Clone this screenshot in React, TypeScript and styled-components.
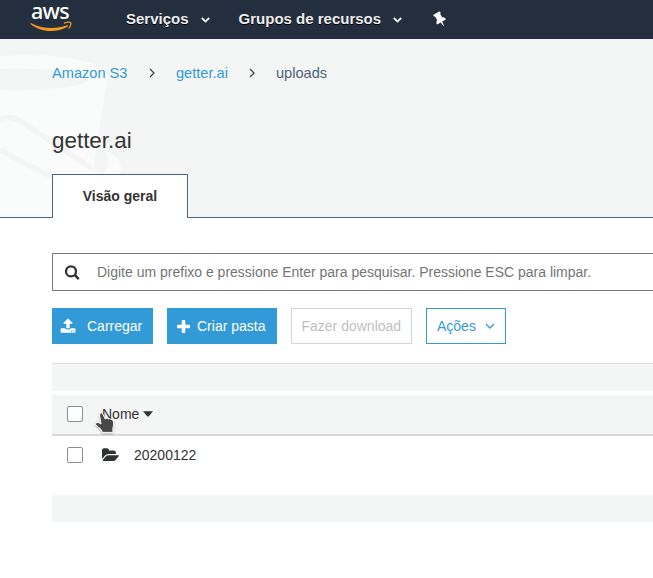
import React from "react";
import styled, { createGlobalStyle } from "styled-components";

const GlobalStyle = createGlobalStyle`
  * { box-sizing: border-box; }
  body {
    margin: 0;
    background: #fff;
    overflow: hidden;
    font-family: "Liberation Sans", Arial, sans-serif;
    font-size: 14px;
    color: #333;
  }
`;

const Page = styled.div`
  width: 100%;
  height: 578px;
`;

const NavBar = styled.header`
  display: flex;
  align-items: center;
  height: 39px;
  padding-left: 30px;
  background: #232f3e;
  color: #fff;
  border-bottom: 1px solid #232744;
`;

const Logo = styled.div`
  display: flex;
  flex-direction: column;
  width: 42px;
  height: 38px;
  margin-right: 54px;
  svg { margin-top: -1px; }
`;

const LogoWord = styled.span`
  height: 22px;
  padding-left: 1px;
  font: 500 21.5px/22px "Noto Sans", sans-serif;
  letter-spacing: -0.7px;
`;

const NavItem = styled.div<{ $gap: number }>`
  display: flex;
  align-items: center;
  margin-right: ${(p) => p.$gap}px;
  font-size: 15px;
  font-weight: bold;
  line-height: 18px;
  color: #eee;
  text-shadow: 0 1px 0 #000;
  white-space: nowrap;
  svg { margin: 2px 0 0 12px; }
`;

const Hero = styled.section`
  position: relative;
  display: flex;
  flex-direction: column;
  height: 179px;
  padding-left: 52px;
  background: #f4f6f6;
  border-bottom: 1px solid #4d6376;
`;

const Watermark = styled.svg`
  position: absolute;
  left: 0;
  top: 0;
`;

const Crumbs = styled.nav`
  position: relative;
  display: flex;
  align-items: center;
  height: 18px;
  margin-top: 25px;
  font-size: 14.6px;
  line-height: 18px;
`;

const Crumb = styled.span<{ $current?: boolean; $width: number }>`
  width: ${(p) => p.$width}px;
  color: ${(p) => (p.$current ? "#4d6376" : "#329ad6")};
  white-space: nowrap;
`;

const CrumbArrow = styled.svg`
  margin: 0 20px;
  flex: none;
`;

const Title = styled.h1`
  position: relative;
  margin: 46px 0 0;
  font-size: 22.4px;
  font-weight: normal;
  line-height: 26px;
`;

const Tab = styled.div`
  position: relative;
  width: 136px;
  height: 44px;
  margin-top: auto;
  margin-bottom: -1px;
  flex: none;
  border: 1px solid #4d6376;
  border-bottom: 0;
  background: #fff;
  font-weight: bold;
  line-height: 42px;
  text-align: center;
`;

const Content = styled.main`
  margin: 35px 0 0 52px;
`;

const SearchBox = styled.div`
  display: flex;
  align-items: center;
  height: 38px;
  padding-left: 12px;
  border: 1px solid #7d7d7d;
  border-right: 0;
  color: #757575;
  font-size: 14px;
  white-space: nowrap;
  svg { margin-right: 17px; }
`;

const Toolbar = styled.div`
  display: flex;
  gap: 14px;
  margin-top: 17px;
`;

const buttonColors = {
  primary: { bg: "#329ad6", fg: "#fff", line: "#329ad6" },
  disabled: { bg: "#fff", fg: "#bfbfbf", line: "#d5d5d5" },
  outline: { bg: "#fff", fg: "#329ad6", line: "#329ad6" },
};

const Button = styled.button<{ $kind: keyof typeof buttonColors; $width: number; $gap?: number; $inset: number }>`
  display: flex;
  align-items: center;
  gap: ${(p) => p.$gap ?? 0}px;
  width: ${(p) => p.$width}px;
  height: 36px;
  padding: 0 0 0 ${(p) => p.$inset}px;
  border: 1px solid ${(p) => buttonColors[p.$kind].line};
  background: ${(p) => buttonColors[p.$kind].bg};
  color: ${(p) => buttonColors[p.$kind].fg};
  font: 14px "Liberation Sans", Arial, sans-serif;
  white-space: nowrap;
  svg { flex: none; }
`;

const Band = styled.div<{ $height: number; $line?: boolean }>`
  height: ${(p) => p.$height}px;
  background: #f4f6f6;
  border-top: ${(p) => (p.$line ? "1px solid #e0e1e1" : "0")};
`;

const Table = styled.div`
  margin-top: 19px;
`;

const HeaderRow = styled.div`
  display: flex;
  align-items: center;
  height: 41px;
  margin-top: 4px;
  padding: 0 0 1px 15px;
  background: #f4f6f6;
  border-bottom: 2px solid #d9d9d9;
`;

const Row = styled.div`
  display: flex;
  align-items: center;
  height: 38px;
  margin-bottom: 21px;
  padding-left: 15px;
`;

const Checkbox = styled.span`
  width: 16px;
  height: 16px;
  margin-right: 19px;
  border: 1px solid #8b8e8e;
  border-radius: 2px;
  background: #fff;
`;

const SortLabel = styled.span`
  position: relative;
  display: flex;
  align-items: center;
  gap: 4px;
`;

const Pointer = styled.svg`
  position: absolute;
  left: -8px;
  top: 6px;
  filter: drop-shadow(0 1px 1px rgba(0, 0, 0, 0.25));
`;

const FileName = styled.span`
  margin-left: 15px;
`;

const Caret = () => (
  <svg width="9" height="6" viewBox="0 0 9 6">
    <path d="M.8 1l3.7 3.5L8.2 1" fill="none" stroke="#eee" strokeWidth="1.8" />
  </svg>
);

const Chevron = () => (
  <CrumbArrow width="8" height="10" viewBox="0 0 8 10">
    <path d="M2 1l4 4-4 4" fill="none" stroke="#444" strokeWidth="1.3" />
  </CrumbArrow>
);

const UploadIcon = () => (
  <svg width="16" height="16" viewBox="0 0 1792 1792" fill="currentColor">
    <path d="M1344 1472q0-26-19-45t-45-19-45 19-19 45 19 45 45 19 45-19 19-45zm256 0q0-26-19-45t-45-19-45 19-19 45 19 45 45 19 45-19 19-45zm128-224v320q0 40-28 68t-68 28h-1472q-40 0-68-28t-28-68v-320q0-40 28-68t68-28h427q21 56 70.5 92t110.5 36h256q61 0 110.5-36t70.5-92h427q40 0 68 28t28 68zm-325-648q-17 40-59 40h-256v448q0 26-19 45t-45 19h-256q-26 0-45-19t-19-45v-448h-256q-42 0-59-40-17-39 14-69l448-448q18-19 45-19t45 19l448 448q31 30 14 69z" />
  </svg>
);

const PlusIcon = () => (
  <svg width="13" height="13" viewBox="192 128 1408 1408" fill="currentColor">
    <path d="M1600 736v192q0 40-28 68t-68 28h-416v416q0 40-28 68t-68 28h-192q-40 0-68-28t-28-68v-416h-416q-40 0-68-28t-28-68v-192q0-40 28-68t68-28h416v-416q0-40 28-68t68-28h192q40 0 68 28t28 68v416h416q40 0 68 28t28 68z" />
  </svg>
);

const FolderIcon = () => (
  <svg width="17" height="14" viewBox="0 128 1880 1500" fill="#303333">
    <path d="M1879 952q0 31-31 66l-336 396q-43 51-120.5 86.5t-143.5 35.5h-1088q-34 0-60.5-13t-26.5-43q0-31 31-66l336-396q43-51 120.5-86.5t143.5-35.5h1088q34 0 60.5 13t26.5 43zm-343-344v160h-832q-94 0-197 47.5t-164 119.5l-337 396-5 6q0-4-.5-12.5t-.5-12.5v-960q0-92 66-158t158-66h320q92 0 158 66t66 158v32h544q92 0 158 66t66 158z" />
  </svg>
);

const PinIcon = () => (
  <svg width="16" height="16" viewBox="0 0 1792 1792" fill="#fff">
    <g transform="translate(90 0) rotate(-30 896 896)">
      <path d="M1472 1216q0 26-19 45t-45 19h-429l-51 483q-2 12-10.5 20.5t-20.5 8.5h-1q-27 0-32-27l-76-485h-404q-26 0-45-19t-19-45q0-123 78.5-221.5t177.5-98.5v-512q-52 0-90-38t-38-90 38-90 90-38h640q52 0 90 38t38 90-38 90-90 38v512q99 0 177.5 98.5t78.5 221.5z" />
    </g>
  </svg>
);

export default function App() {
  return (
    <Page>
      <GlobalStyle />
      <NavBar>
        <Logo>
          <LogoWord>aws</LogoWord>
          <svg width="42" height="11" viewBox="0 0 42 11">
            <path d="M.4 2.4Q.6 1.8 1.3 2.2C12.5 8 25.5 8.5 37 4.3c1.2-.4 1.7.5.8 1.2C27 12.2 10.5 11.8.6 3.1Z" fill="#f7981f" />
            <path d="M34 2.4c2.2-1.4 6.1-1.5 6.7-.8.6.8-.2 4-2 6" fill="none" stroke="#f7981f" strokeWidth="1.3" />
          </svg>
        </Logo>
        <NavItem $gap={29}>Serviços <Caret /></NavItem>
        <NavItem $gap={29}>Grupos de recursos <Caret /></NavItem>
        <PinIcon />
      </NavBar>
      <Hero>
        <Watermark width="125" height="178" viewBox="0 0 125 178">
          <path d="M0 17C52 13 105 22 108 36L93 131Q95 134 99 133L88 178H0Z" fill="#fafcfb" />
          <path d="M0 30C40 28 86 34 88 41C84 48 35 53 0 51Z" fill="#f4f6f6" />
          <path d="M0 80.5Q10 76 20 82L94 131M0 110Q25 126 60 141" fill="none" stroke="#f4f6f6" strokeWidth="5.5" />
          <path d="M106 111C115 115 122 123 121 131L118 137H101Q109 130 108 122Z" fill="#fafcfb" />
        </Watermark>
        <Crumbs>
          <Crumb $width={76}>Amazon S3</Crumb>
          <Chevron />
          <Crumb $width={52}>getter.ai</Crumb>
          <Chevron />
          <Crumb $width={60} $current>uploads</Crumb>
        </Crumbs>
        <Title>getter.ai</Title>
        <Tab>Visão geral</Tab>
      </Hero>
      <Content>
        <SearchBox>
          <svg width="15" height="15" viewBox="0 0 15 15" fill="none" stroke="#303333" strokeLinecap="round">
            <circle cx="6" cy="6.4" r="5" strokeWidth="2.3" />
            <path d="M10 10.2L13 13.3" strokeWidth="2.6" />
          </svg>
          Digite um prefixo e pressione Enter para pesquisar. Pressione ESC para limpar.
        </SearchBox>
        <Toolbar>
          <Button $kind="primary" $width={101} $inset={7} $gap={11}><UploadIcon />Carregar</Button>
          <Button $kind="primary" $width={110} $inset={8.5} $gap={7.5}><PlusIcon />Criar pasta</Button>
          <Button $kind="disabled" $width={121} $inset={9.5}>Fazer download</Button>
          <Button $kind="outline" $width={80} $inset={10} $gap={9}>
            Ações
            <svg width="10" height="6" viewBox="0 0 10 6"><path d="M1 1l4 4 4-4" fill="none" stroke="#329ad6" strokeWidth="1.3" /></svg>
          </Button>
        </Toolbar>
        <Table>
          <Band $height={28} $line />
          <HeaderRow>
            <Checkbox />
            <SortLabel>
              Nome
              <svg width="10" height="6" viewBox="0 0 10 6"><path d="M0 .3h10L5.8 5.2q-.8.8-1.6 0Z" fill="#303333" /></svg>
              <Pointer width="22" height="23" viewBox="0 0 22 23">
                <path d="M6.4 1.2Q7.8.3 8.7 1.8L11.2 7l1.4-.8 1.6.7 1.5-.4 1.2 1 1.4.1c2 2.2 1.4 6.4.5 8.6l.2 4.2H8.1L7.6 18 1.5 12.5Q1.5 10 4 10.2L7 12 5.5 2.8Z" fill="#484848" stroke="#fff" strokeWidth="1" />
              </Pointer>
            </SortLabel>
          </HeaderRow>
          <Row>
            <Checkbox />
            <FolderIcon />
            <FileName>20200122</FileName>
          </Row>
          <Band $height={27} />
        </Table>
      </Content>
    </Page>
  );
}
